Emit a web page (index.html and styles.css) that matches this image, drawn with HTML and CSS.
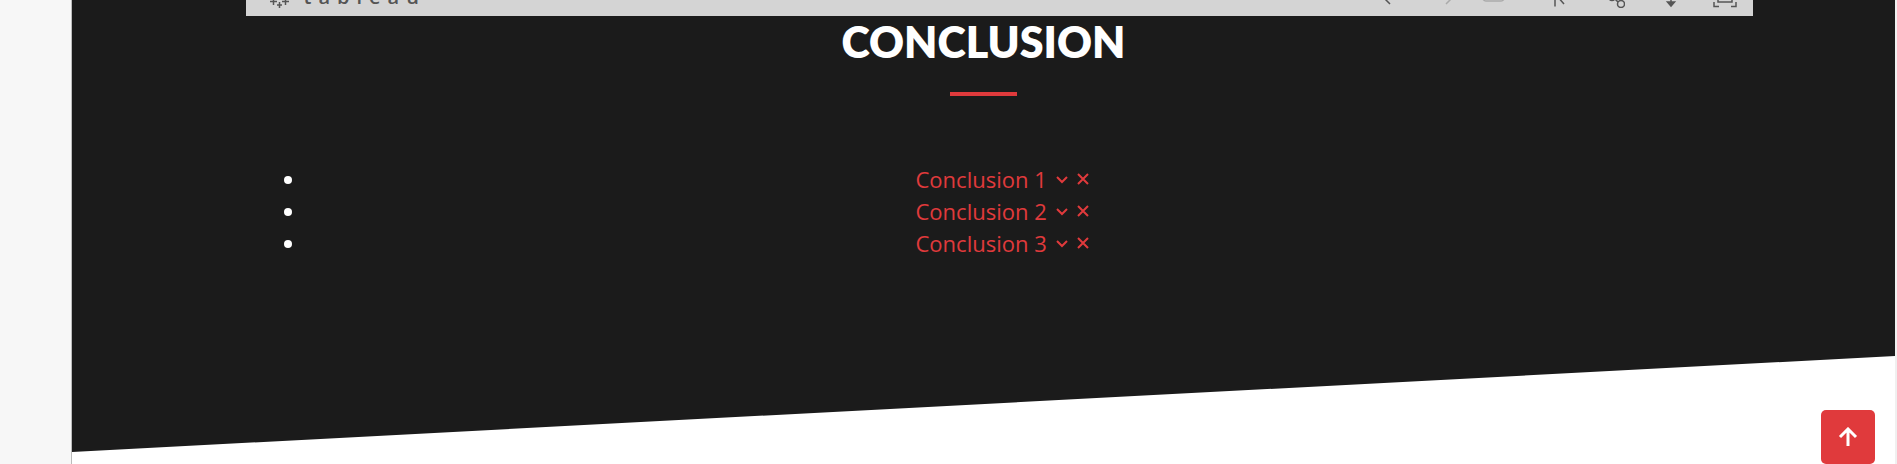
FILE: index.html
```html
<!DOCTYPE html>
<html lang="en">
<head>
<meta charset="utf-8">
<title>Conclusion</title>
<link rel="stylesheet" href="styles.css">
</head>
<body>
<main class="page">
  <section class="conclusion">
    <div class="container">
      <div class="viz-toolbar">
        <div class="viz-brand">
          <svg class="viz-mark" viewBox="0 0 20 22" aria-hidden="true"><path d="M3.500 11v7M0 14.500h7M15.500 11v7M12 14.500h7M9.500 9v3M9.500 15v6M7 18h5"/></svg>
          <span class="viz-name" aria-label="tableau"><span>t</span><span>a</span><span>b</span><span>l</span><span>e</span><span>a</span><span>u</span></span>
        </div>
        <div class="viz-actions">
          <button aria-label="Undo"><svg viewBox="0 0 24 20"><path d="M14 3 7 10l6 6"/></svg></button>
          <button aria-label="Redo" class="faded"><svg viewBox="0 0 24 20"><path d="m14 3 6 6-7 7"/></svg></button>
          <button aria-label="Replay" class="faded replay"><svg viewBox="0 0 24 20"><path d="M2 11q1 2 3 2h15q2 0 3-2"/></svg></button>
          <button aria-label="Reset"><svg viewBox="0 0 24 20"><path d="M10 2v16.500M19 16l-7-8"/></svg></button>
          <button aria-label="Share"><svg viewBox="0 0 24 20"><circle cx="11" cy="9" r="3.500"/><circle cx="20" cy="16" r="3.500"/><path d="m14 11 3 3"/></svg></button>
          <button aria-label="Download"><svg viewBox="0 0 24 20"><path d="M14 2v12"/><path class="solid" d="M10.500 14h7L14 18z"/></svg></button>
          <button aria-label="Full screen"><svg viewBox="0 0 24 20"><path d="M1 14v4.500h5M18 18.500h5V14M5 4v10h14V4"/></svg></button>
        </div>
      </div>
      <h2 class="title">CONCLUSION</h2>
      <ul class="list">
        <li><a href="#c1">Conclusion 1 <svg class="chevron" viewBox="0 0 12 12"><path d="m1 4 5 5 5-5"/></svg><svg class="cross" viewBox="0 0 12 12"><path d="m1 1 10 10M11 1 1 11"/></svg></a></li>
        <li><a href="#c2">Conclusion 2 <svg class="chevron" viewBox="0 0 12 12"><path d="m1 4 5 5 5-5"/></svg><svg class="cross" viewBox="0 0 12 12"><path d="m1 1 10 10M11 1 1 11"/></svg></a></li>
        <li><a href="#c3">Conclusion 3 <svg class="chevron" viewBox="0 0 12 12"><path d="m1 4 5 5 5-5"/></svg><svg class="cross" viewBox="0 0 12 12"><path d="m1 1 10 10M11 1 1 11"/></svg></a></li>
      </ul>
    </div>
  </section>
</main>
<a class="back-to-top" href="#" aria-label="Back to top"><svg viewBox="0 0 20 20"><path d="M10 19V2M2 10l8-8 8 8"/></svg></a>
</body>
</html>
```
FILE: styles.css
```css
* { box-sizing: border-box; }
html { height: 100%; }
body {
  height: 100%;
  margin: 0;
  padding: 0 2px 0 71px;
  background: linear-gradient(90deg, #f7f7f7 50%, #f0f0f0 50%);
  color: #fff;
  font-family: "Open Sans", sans-serif;
  overflow: hidden;
}
.page {
  min-height: 100%;
  border-left: 1px solid #bbb;
  background: #fff;
}
.conclusion {
  padding-bottom: 193px;
  background: #1b1b1b;
  clip-path: polygon(0 0, 100% 0, 100% calc(100% - 96px), 0 100%);
}
.container {
  max-width: 1440px;
  margin: 0 auto;
}
.viz-toolbar {
  display: flex;
  align-items: flex-end;
  justify-content: space-between;
  height: 16px;
  margin: 0 -49px 0 -18px;
  padding: 0 16px 0 24px;
  background: #d4d4d4;
  color: #555;
  overflow: hidden;
}
.viz-brand { display: flex; align-items: flex-end; gap: 14px; }
.viz-mark { width: 20px; height: 22px; margin-bottom: 7px; }
.viz-name {
  display: flex;
  gap: 7px;
  font-size: 20px;
  font-weight: 600;
  line-height: 24px;
  margin-bottom: 7px;
}
.viz-actions { display: flex; gap: 32px; }
button { display: flex; width: 24px; height: 20px; margin: 0 0 8px; padding: 0; border: 0; background: none; color: #555; }
.faded { color: #aaa; }
.replay { margin-left: -8px; margin-right: 8px; }
svg { fill: none; stroke: currentColor; stroke-width: 1.500; }
button svg { width: 24px; height: 20px; }
.solid { fill: currentColor; }
.title {
  margin: 0 0 38px;
  padding: 1px 0 29px;
  font-family: Lato, sans-serif;
  font-size: 43px;
  font-weight: 800;
  line-height: 50px;
  text-align: center;
}
.title::after {
  content: "";
  display: block;
  width: 67px;
  height: 4px;
  margin: 25px auto 0;
  background: #e03a3c;
}
.list {
  margin: 0;
  padding: 0 5px 0 43px;
  font-size: 22px;
  line-height: 32px;
  text-align: center;
}
a { color: #e03a3c; text-decoration: none; }
.chevron, .cross { width: 12px; height: 12px; margin-bottom: 3px; stroke-width: 2; }
.chevron { margin-left: 4px; margin-right: 9px; }
.back-to-top {
  position: fixed;
  right: 22px;
  bottom: 0;
  display: flex;
  align-items: center;
  justify-content: center;
  width: 54px;
  height: 54px;
  border-radius: 5px;
  background: #e03a3c;
  color: #fff;
}
.back-to-top svg { width: 20px; height: 20px; stroke-width: 3; }
```
